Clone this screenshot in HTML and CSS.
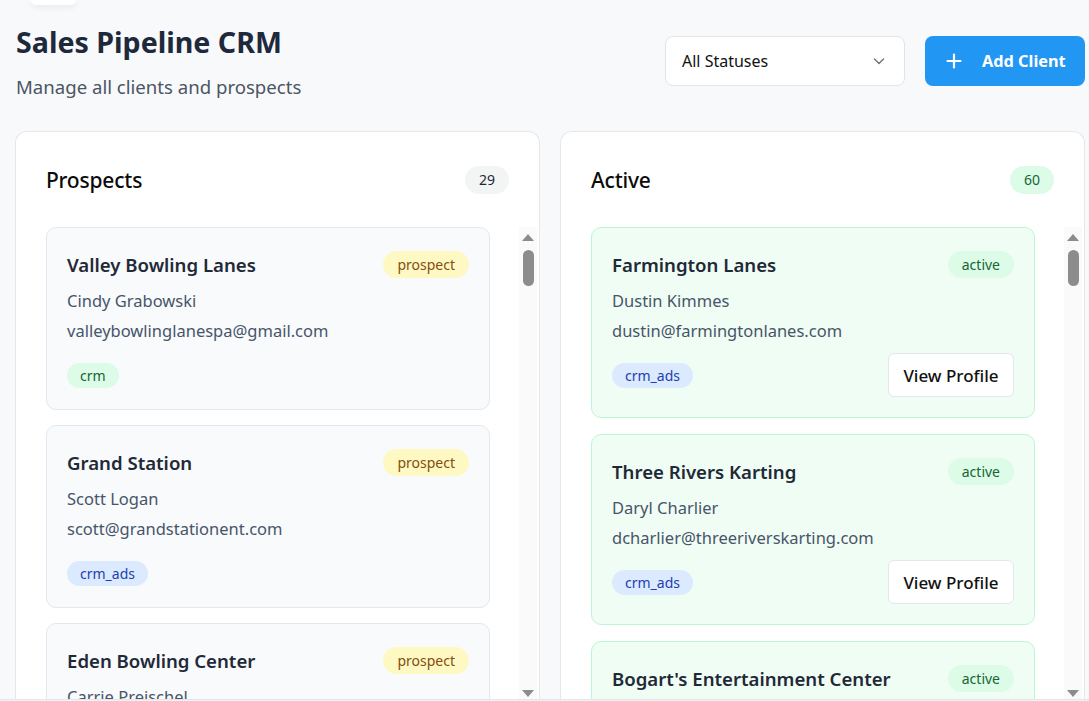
FILE: index.html
```html
<!DOCTYPE html>
<html lang="en">
<head>
<meta charset="utf-8">
<title>Sales Pipeline CRM</title>
<link rel="stylesheet" href="styles.css">
</head>
<body>
<div class="page">
  <div class="topstub"></div>
  <header class="top">
    <div class="titles">
      <h1 class="title">Sales Pipeline CRM</h1>
      <p class="subtitle">Manage all clients and prospects</p>
    </div>
    <div class="actions">
      <div class="select">
        <span>All Statuses</span>
        <svg class="chev" width="14" height="14" viewBox="0 0 14 14"><path d="M2.5 5l4.5 4.5 4.5-4.5" fill="none" stroke="#6b7280" stroke-width="1.4" stroke-linecap="round" stroke-linejoin="round"/></svg>
      </div>
      <button class="add">
        <svg width="16" height="16" viewBox="0 0 16 16"><path d="M8 1.5v13M1.5 8h13" stroke="#fff" stroke-width="2.2" stroke-linecap="round"/></svg>
        <span>Add Client</span>
      </button>
    </div>
  </header>

  <main class="board">
    <section class="panel">
      <div class="panel-head">
        <h2 class="panel-title">Prospects</h2>
        <span class="count count-gray">29</span>
      </div>
      <div class="panel-body">
        <div class="list">
          <article class="card card-prospect">
            <div class="card-top">
              <h3 class="name">Valley Bowling Lanes</h3>
              <span class="pill pill-prospect">prospect</span>
            </div>
            <p class="contact">Cindy Grabowski</p>
            <p class="email">valleybowlinglanespa@gmail.com</p>
            <div class="card-foot">
              <span class="tag tag-green">crm</span>
            </div>
          </article>
          <article class="card card-prospect">
            <div class="card-top">
              <h3 class="name">Grand Station</h3>
              <span class="pill pill-prospect">prospect</span>
            </div>
            <p class="contact">Scott Logan</p>
            <p class="email">scott@grandstationent.com</p>
            <div class="card-foot">
              <span class="tag tag-blue">crm_ads</span>
            </div>
          </article>
          <article class="card card-prospect">
            <div class="card-top">
              <h3 class="name">Eden Bowling Center</h3>
              <span class="pill pill-prospect">prospect</span>
            </div>
            <p class="contact">Carrie Preischel</p>
            <p class="email">carrie@edenbowling.com</p>
          </article>
        </div>
        <div class="scrollbar">
          <span class="arrow arrow-up"></span>
          <span class="thumb"></span>
          <span class="track-fill"></span>
          <span class="arrow arrow-down"></span>
        </div>
      </div>
    </section>

    <section class="panel">
      <div class="panel-head">
        <h2 class="panel-title">Active</h2>
        <span class="count count-green">60</span>
      </div>
      <div class="panel-body">
        <div class="list list-active">
          <article class="card card-active">
            <div class="card-top">
              <h3 class="name">Farmington Lanes</h3>
              <span class="pill pill-active">active</span>
            </div>
            <p class="contact">Dustin Kimmes</p>
            <p class="email">dustin@farmingtonlanes.com</p>
            <div class="card-foot">
              <span class="tag tag-blue">crm_ads</span>
              <button class="view">View Profile</button>
            </div>
          </article>
          <article class="card card-active">
            <div class="card-top">
              <h3 class="name">Three Rivers Karting</h3>
              <span class="pill pill-active">active</span>
            </div>
            <p class="contact">Daryl Charlier</p>
            <p class="email">dcharlier@threeriverskarting.com</p>
            <div class="card-foot">
              <span class="tag tag-blue">crm_ads</span>
              <button class="view">View Profile</button>
            </div>
          </article>
          <article class="card card-active">
            <div class="card-top">
              <h3 class="name">Bogart's Entertainment Center</h3>
              <span class="pill pill-active">active</span>
            </div>
            <p class="contact">Contact</p>
          </article>
        </div>
        <div class="scrollbar">
          <span class="arrow arrow-up"></span>
          <span class="thumb"></span>
          <span class="track-fill"></span>
          <span class="arrow arrow-down"></span>
        </div>
      </div>
    </section>
  </main>
  <div class="bottomline"></div>
</div>
</body>
</html>
```

FILE: styles.css
```css
* { box-sizing: border-box; }
html, body { margin: 0; padding: 0; }
body {
  background: #f8f9fb;
  font-family: "Noto Sans", "Open Sans", sans-serif;
  color: #1e293b;
  height: 701px;
  overflow: hidden;
}
.page {
  height: 701px;
  display: flex;
  flex-direction: column;
  padding: 0 4px 0 15px;
}
.topstub {
  width: 45px;
  height: 5px;
  margin-left: 16px;
  background: #fff;
  border-radius: 0 0 8px 8px;
  box-shadow: 0 2px 6px rgba(0,0,0,0.08);
  flex: none;
}
.top {
  display: flex;
  justify-content: space-between;
  align-items: flex-start;
  flex: none;
}
.titles { padding-top: 18px; padding-left: 1px; }
.title {
  margin: 0;
  font-size: 28.6px;
  line-height: 38px;
  font-weight: 700;
  color: #1e293b;
}
.subtitle {
  margin: 14px 0 0;
  font-size: 18.6px;
  line-height: 24px;
  color: #4b5563;
}
.actions {
  display: flex;
  gap: 20px;
  margin-top: 31px;
}
.select {
  width: 240px;
  height: 50px;
  background: #fff;
  border: 1px solid #e2e4e8;
  border-radius: 8px;
  display: flex;
  align-items: center;
  justify-content: space-between;
  padding: 0 18px 0 16px;
  font-size: 16px;
  color: #111;
}
.add {
  width: 160px;
  height: 50px;
  border: none;
  border-radius: 8px;
  background: #2196f3;
  color: #fff;
  font-family: inherit;
  font-size: 16.3px;
  font-weight: 700;
  display: flex;
  align-items: center;
  gap: 20px;
  padding: 0 0 0 21px;
}
.board {
  margin-top: 32px;
  flex: 1;
  min-height: 0;
  display: grid;
  grid-template-columns: 525px 525px;
  gap: 20px;
}
.panel {
  background: #fff;
  border: 1px solid #e5e7eb;
  border-bottom: none;
  border-radius: 12px 12px 0 0;
  display: flex;
  flex-direction: column;
  min-height: 0;
}
.panel-head {
  display: flex;
  justify-content: space-between;
  align-items: center;
  height: 95px;
  padding: 0 30px;
  flex: none;
}
.panel-title {
  margin: 0;
  font-size: 21px;
  font-weight: 500;
  color: #0b0b0b;
  letter-spacing: -0.2px;
}
.count {
  min-width: 44px;
  height: 28px;
  border-radius: 14px;
  display: inline-flex;
  align-items: center;
  justify-content: center;
  font-size: 14px;
  color: #1f2937;
}
.count-gray { background: #f3f4f4; }
.count-green { background: #dcfce7; color: #166534; }
.panel-body {
  flex: 1;
  min-height: 0;
  display: flex;
  overflow: hidden;
}
.list {
  width: 504px;
  padding: 0 30px;
  display: flex;
  flex-direction: column;
  gap: 15px;
}
.list-active { gap: 16px; }
.card {
  border-radius: 10px;
  padding: 21px 20px 21px;
  flex: none;
}
.card-prospect { background: #f8fafc; border: 1px solid #e2e8f0; }
.card-active { background: #f0fdf4; border: 1px solid #bbf7d0; padding-bottom: 20px; }
.card-top {
  display: flex;
  justify-content: space-between;
  align-items: center;
  height: 30px;
}
.name {
  margin: 0;
  font-size: 18.6px;
  font-weight: 600;
  color: #1f2937;
}
.pill {
  height: 27px;
  padding: 0 14px;
  border-radius: 14px;
  display: inline-flex;
  align-items: center;
  font-size: 14px;
}
.pill-prospect { background: #fef9c3; color: #854d0e; }
.pill-active { background: #dcfce7; color: #166534; }
.contact {
  margin: 11px 0 0;
  font-size: 16.5px;
  line-height: 22px;
  color: #475569;
}
.email {
  margin: 8px 0 0;
  font-size: 16.5px;
  line-height: 22px;
  color: #475569;
}
.card-foot {
  margin-top: 21px;
  display: flex;
  justify-content: space-between;
  align-items: center;
  min-height: 25px;
}
.card-active .card-foot { margin-top: 11px; }
.tag {
  height: 25px;
  padding: 0 13px;
  border-radius: 13px;
  display: inline-flex;
  align-items: center;
  font-size: 14px;
}
.tag-green { background: #dcfce7; color: #166534; }
.tag-blue { background: #dbeafe; color: #1e40af; }
.view {
  height: 44px;
  width: 126px;
  background: #fff;
  border: 1px solid #e5e7eb;
  border-radius: 6px;
  font-family: inherit;
  font-size: 17px;
  font-weight: 500;
  color: #111;
}
.scrollbar {
  width: 18px;
  margin-left: -1px;
  background: #fafafa;
  display: flex;
  flex-direction: column;
  align-items: center;
  flex: none;
}
.arrow {
  width: 0; height: 0;
  border-left: 6px solid transparent;
  border-right: 6px solid transparent;
  flex: none;
}
.arrow-up { border-bottom: 7px solid #8c8c8c; margin-top: 7px; }
.arrow-down { border-top: 7px solid #8c8c8c; margin-bottom: 2px; }
.thumb {
  width: 11px;
  height: 36px;
  margin-top: 9px;
  border-radius: 6px;
  background: #8c8c8c;
  flex: none;
}
.track-fill { flex: 1; }
.bottomline {
  height: 2px;
  flex: none;
  margin: 0 -4px 0 -15px;
  border-top: 1px solid #e3e5e8;
  background: #f1f2f4;
}
```
